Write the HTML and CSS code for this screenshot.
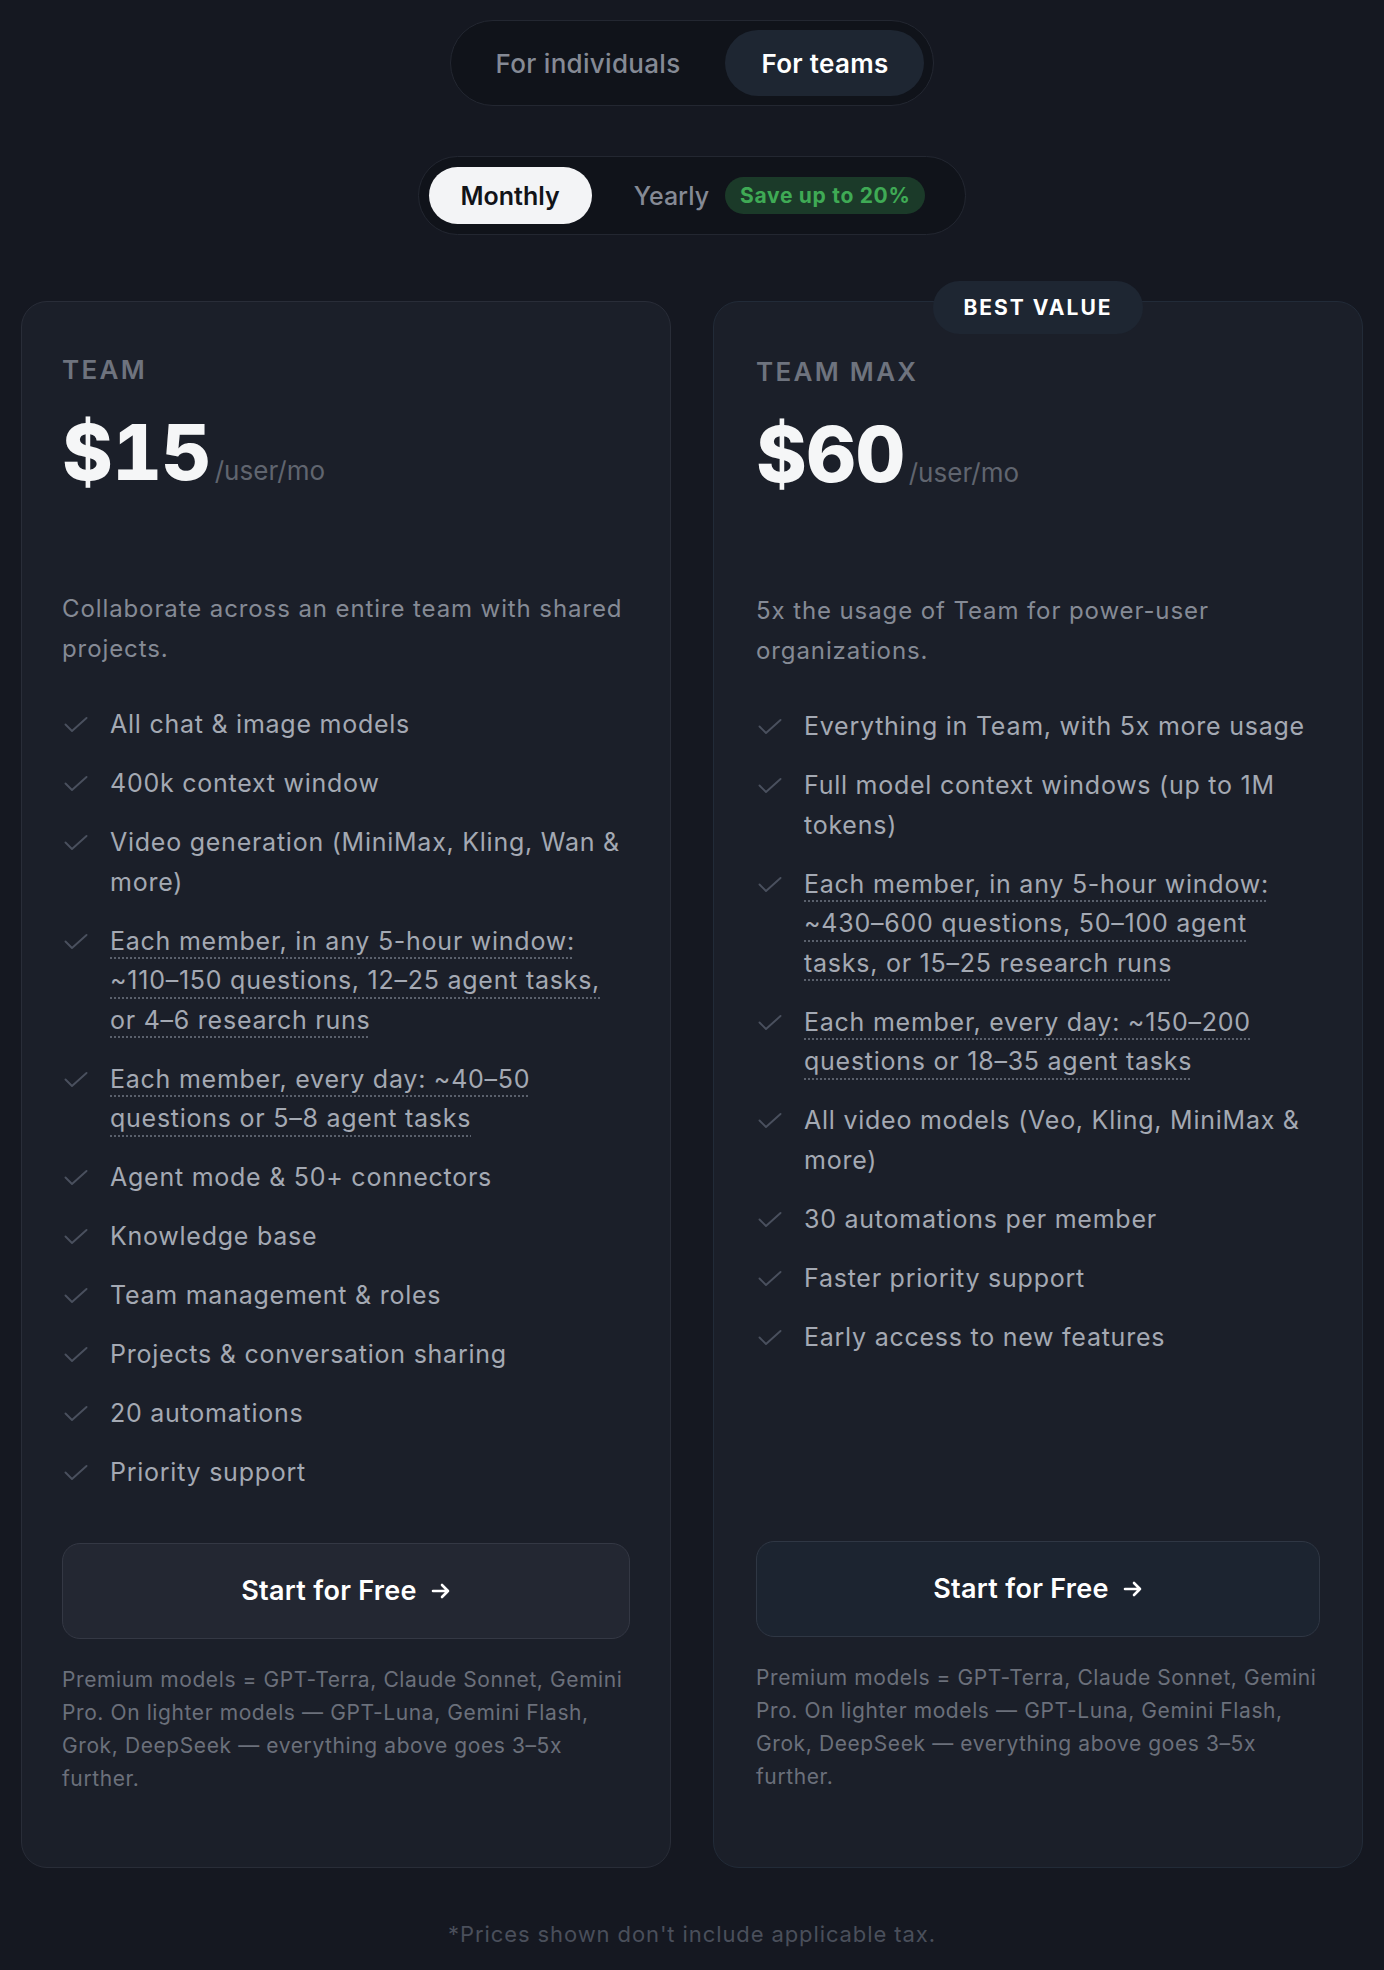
FILE: index.html
```html
<!DOCTYPE html>
<html lang="en">
<head>
<meta charset="utf-8">
<title>Pricing — Teams</title>
<link rel="stylesheet" href="styles.css">
</head>
<body>
<main class="page">
  <div class="audience">
    <button class="aud-btn">For individuals</button>
    <button class="aud-btn active">For teams</button>
  </div>

  <div class="billing">
    <button class="bill-btn active">Monthly</button>
    <button class="bill-btn yearly">Yearly <span class="save">Save up to 20%</span></button>
  </div>

  <section class="plans">
    <article class="card">
      <h2 class="plan-name">TEAM</h2>
      <div class="price"><span class="amount">$15</span><span class="per">/user/mo</span></div>
      <p class="desc">Collaborate across an entire team with shared projects.</p>
      <ul class="features">
        <li><span class="chk"><svg viewBox="0 0 24 16" width="24" height="16"><path d="M1.5 7.5 L8 14 L22.5 1"/></svg></span><span>All chat &amp; image models</span></li>
        <li><span class="chk"><svg viewBox="0 0 24 16" width="24" height="16"><path d="M1.5 7.5 L8 14 L22.5 1"/></svg></span><span>400k context window</span></li>
        <li><span class="chk"><svg viewBox="0 0 24 16" width="24" height="16"><path d="M1.5 7.5 L8 14 L22.5 1"/></svg></span><span>Video generation (MiniMax, Kling, Wan &amp; more)</span></li>
        <li><span class="chk"><svg viewBox="0 0 24 16" width="24" height="16"><path d="M1.5 7.5 L8 14 L22.5 1"/></svg></span><span class="dotted">Each member, in any 5-hour window: ~110–&#8288;150 questions, 12–&#8288;25 agent tasks, or 4–&#8288;6 research runs</span></li>
        <li><span class="chk"><svg viewBox="0 0 24 16" width="24" height="16"><path d="M1.5 7.5 L8 14 L22.5 1"/></svg></span><span class="dotted">Each member, every day: ~40–&#8288;50 questions or 5–&#8288;8 agent tasks</span></li>
        <li><span class="chk"><svg viewBox="0 0 24 16" width="24" height="16"><path d="M1.5 7.5 L8 14 L22.5 1"/></svg></span><span>Agent mode &amp; 50+ connectors</span></li>
        <li><span class="chk"><svg viewBox="0 0 24 16" width="24" height="16"><path d="M1.5 7.5 L8 14 L22.5 1"/></svg></span><span>Knowledge base</span></li>
        <li><span class="chk"><svg viewBox="0 0 24 16" width="24" height="16"><path d="M1.5 7.5 L8 14 L22.5 1"/></svg></span><span>Team management &amp; roles</span></li>
        <li><span class="chk"><svg viewBox="0 0 24 16" width="24" height="16"><path d="M1.5 7.5 L8 14 L22.5 1"/></svg></span><span>Projects &amp; conversation sharing</span></li>
        <li><span class="chk"><svg viewBox="0 0 24 16" width="24" height="16"><path d="M1.5 7.5 L8 14 L22.5 1"/></svg></span><span>20 automations</span></li>
        <li><span class="chk"><svg viewBox="0 0 24 16" width="24" height="16"><path d="M1.5 7.5 L8 14 L22.5 1"/></svg></span><span>Priority support</span></li>
      </ul>
      <button class="cta">Start for Free <svg class="arrow" viewBox="0 0 20 16" width="20" height="16"><path d="M2 8 H17 M11 2 L17 8 L11 14"/></svg></button>
      <p class="note">Premium models = GPT-Terra, Claude Sonnet, Gemini Pro. On lighter models — GPT-Luna, Gemini Flash, Grok, DeepSeek — everything above goes 3–&#8288;5x further.</p>
    </article>

    <article class="card featured">
      <div class="ribbon">BEST VALUE</div>
      <h2 class="plan-name">TEAM MAX</h2>
      <div class="price"><span class="amount">$60</span><span class="per">/user/mo</span></div>
      <p class="desc">5x the usage of Team for power-user organizations.</p>
      <ul class="features">
        <li><span class="chk"><svg viewBox="0 0 24 16" width="24" height="16"><path d="M1.5 7.5 L8 14 L22.5 1"/></svg></span><span>Everything in Team, with 5x more usage</span></li>
        <li><span class="chk"><svg viewBox="0 0 24 16" width="24" height="16"><path d="M1.5 7.5 L8 14 L22.5 1"/></svg></span><span>Full model context windows (up to 1M tokens)</span></li>
        <li><span class="chk"><svg viewBox="0 0 24 16" width="24" height="16"><path d="M1.5 7.5 L8 14 L22.5 1"/></svg></span><span class="dotted">Each member, in any 5-hour window: ~430–&#8288;600 questions, 50–&#8288;100 agent tasks, or 15–&#8288;25 research runs</span></li>
        <li><span class="chk"><svg viewBox="0 0 24 16" width="24" height="16"><path d="M1.5 7.5 L8 14 L22.5 1"/></svg></span><span class="dotted">Each member, every day: ~150–&#8288;200 questions or 18–&#8288;35 agent tasks</span></li>
        <li><span class="chk"><svg viewBox="0 0 24 16" width="24" height="16"><path d="M1.5 7.5 L8 14 L22.5 1"/></svg></span><span>All video models (Veo, Kling, MiniMax &amp; more)</span></li>
        <li><span class="chk"><svg viewBox="0 0 24 16" width="24" height="16"><path d="M1.5 7.5 L8 14 L22.5 1"/></svg></span><span>30 automations per member</span></li>
        <li><span class="chk"><svg viewBox="0 0 24 16" width="24" height="16"><path d="M1.5 7.5 L8 14 L22.5 1"/></svg></span><span>Faster priority support</span></li>
        <li><span class="chk"><svg viewBox="0 0 24 16" width="24" height="16"><path d="M1.5 7.5 L8 14 L22.5 1"/></svg></span><span>Early access to new features</span></li>
      </ul>
      <button class="cta">Start for Free <svg class="arrow" viewBox="0 0 20 16" width="20" height="16"><path d="M2 8 H17 M11 2 L17 8 L11 14"/></svg></button>
      <p class="note">Premium models = GPT-Terra, Claude Sonnet, Gemini Pro. On lighter models — GPT-Luna, Gemini Flash, Grok, DeepSeek — everything above goes 3–&#8288;5x further.</p>
    </article>
  </section>

  <p class="tax">*Prices shown don't include applicable tax.</p>
</main>
</body>
</html>
```

FILE: styles.css
```css
* { box-sizing: border-box; }

html, body {
  margin: 0;
  padding: 0;
  background: #151821;
}

body {
  font-family: Inter, "Noto Sans", "Liberation Sans", sans-serif;
  color: #e5e7eb;
}

button {
  font-family: inherit;
  border: none;
  cursor: pointer;
}

.page {
  display: flex;
  flex-direction: column;
  align-items: center;
  padding: 20px 21px 0;
  min-height: 1970px;
}

/* audience toggle */
.audience {
  display: flex;
  gap: 9px;
  padding: 9px;
  border: 1px solid #232731;
  border-radius: 999px;
  background: #10131a;
}

.aud-btn {
  height: 66px;
  padding: 0 36px;
  border-radius: 999px;
  background: transparent;
  color: #858a95;
  font-size: 26px;
  font-weight: 500;
  letter-spacing: 0.3px;
}

.aud-btn.active {
  background: #1e2632;
  color: #ffffff;
  font-weight: 600;
}

/* billing toggle */
.billing {
  margin-top: 50px;
  display: flex;
  gap: 10px;
  padding: 10px;
  border: 1px solid #232731;
  border-radius: 999px;
  background: #10131a;
}

.bill-btn {
  height: 57px;
  padding: 0 32px;
  border-radius: 999px;
  background: transparent;
  color: #858a95;
  font-size: 25px;
  font-weight: 500;
  display: flex;
  align-items: center;
}

.bill-btn.active {
  background: #f3f4f6;
  color: #111318;
  font-weight: 600;
}

.bill-btn.yearly {
  padding-right: 30px;
}

.save {
  margin-left: 16px;
  height: 37px;
  padding: 0 15px;
  border-radius: 999px;
  background: #1b3a29;
  color: #3faa55;
  font-size: 21px;
  font-weight: 700;
  letter-spacing: 0.7px;
  display: inline-flex;
  align-items: center;
}

/* plans */
.plans {
  margin-top: 66px;
  width: 100%;
  display: grid;
  grid-template-columns: 1fr 1fr;
  gap: 42px;
}

.card {
  position: relative;
  display: flex;
  flex-direction: column;
  background: #1b1f29;
  border: 1px solid #292d38;
  border-radius: 26px;
  padding: 52px 40px 72px;
}

.card.featured {
  border-color: #222b38;
  padding: 54px 42px 74px;
}

.ribbon {
  position: absolute;
  top: -21px;
  left: 50%;
  transform: translateX(-50%);
  width: 210px;
  height: 53px;
  border-radius: 999px;
  background: #1e2632;
  color: #ffffff;
  font-size: 21px;
  font-weight: 700;
  letter-spacing: 2px;
  display: flex;
  align-items: center;
  justify-content: center;
}

.plan-name {
  margin: 0;
  font-size: 26px;
  line-height: 32px;
  font-weight: 600;
  letter-spacing: 2.3px;
  color: #6e737e;
}

.price {
  margin-top: 28px;
  display: flex;
  align-items: baseline;
}

.amount {
  font-size: 77px;
  line-height: 77px;
  font-weight: 800;
  color: #f5f6f7;
  letter-spacing: -0.5px;
  font-variant-numeric: tabular-nums;
}

.per {
  margin-left: 4px;
  font-size: 26px;
  color: #60656f;
  font-weight: 400;
}

.desc {
  margin: 98px 0 0;
  font-size: 24px;
  line-height: 40px;
  letter-spacing: 0.9px;
  color: #858a95;
}

.features {
  list-style: none;
  margin: 36px 0 50px;
  padding: 0;
  display: flex;
  flex-direction: column;
  gap: 19.5px;
}

.features li {
  display: flex;
  font-size: 25px;
  line-height: 39.5px;
  letter-spacing: 0.75px;
  color: #a4a9b3;
}

.chk {
  flex: 0 0 28px;
  height: 39.5px;
  margin-right: 20px;
  display: flex;
  justify-content: center;
  padding-top: 12px;
}

.chk svg {
  display: block;
  fill: none;
  stroke: #4a505e;
  stroke-width: 1.9;
  stroke-linecap: round;
  stroke-linejoin: round;
}

.dotted {
  text-decoration: underline dotted #5a606c;
  text-decoration-thickness: 2px;
  text-underline-offset: 8px;
}

.cta {
  margin-top: auto;
  height: 96px;
  width: 100%;
  border-radius: 18px;
  background: #232732;
  border: 1.5px solid #343844;
  color: #ffffff;
  font-size: 27px;
  font-weight: 600;
  letter-spacing: 0.3px;
  display: flex;
  align-items: center;
  justify-content: center;
  gap: 14px;
  flex-shrink: 0;
}

.featured .cta {
  background: #1c2430;
  border-color: #2f3744;
}

.arrow {
  fill: none;
  stroke: #ffffff;
  stroke-width: 2.6;
  stroke-linecap: round;
  stroke-linejoin: round;
}

.note {
  margin: 24px 0 0;
  font-size: 21px;
  line-height: 33px;
  letter-spacing: 0.6px;
  color: #6b707b;
}

.tax {
  margin: 51px 0 0;
  font-size: 22px;
  line-height: 30px;
  letter-spacing: 0.9px;
  color: #4a4f5b;
}
```
